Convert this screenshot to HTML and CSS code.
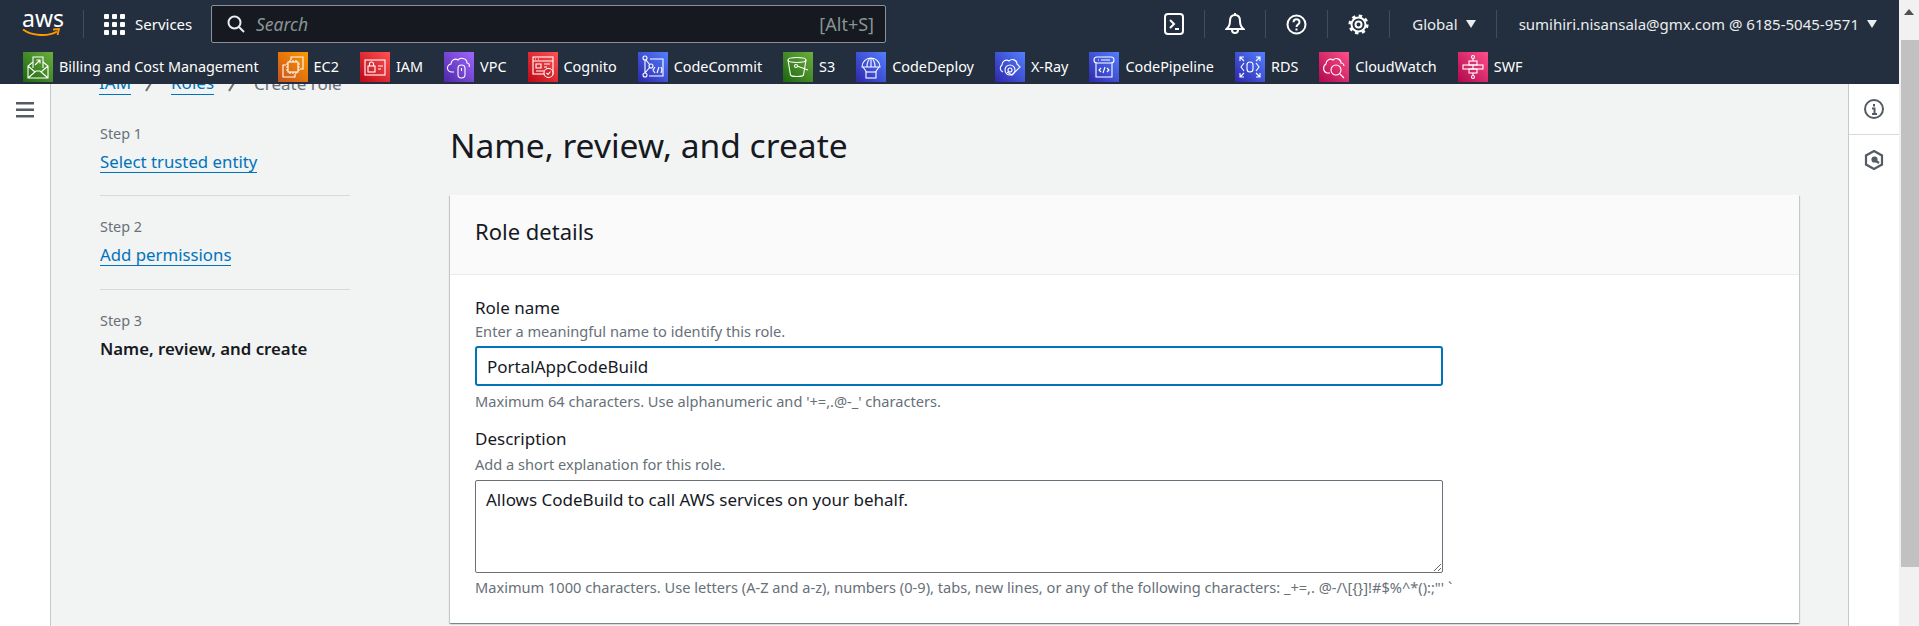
FILE: index.html
```html
<!DOCTYPE html>
<html lang="en">

<head>
  <meta charset="UTF-8">
  <title>Create role</title>
  <link rel="stylesheet" href="styles.css">
</head>

<body>
  <div class="window">
    <div class="page">
      <header class="topbar">
        <div class="logo">
          <span class="logo-text">aws</span>
          <svg class="logo-smile" viewBox="0 0 40 10" width="40" height="10">
            <path d="M1 1.5C10 8 26 9 35 3.5" fill="none" stroke="#f90" stroke-width="2" />
            <path d="M31 1.5l6-.5-1.500 6" fill="none" stroke="#f90" stroke-width="1.800" />
          </svg>
        </div>
        <div class="services">
          <svg viewBox="0 0 21 21" width="21" height="21" fill="#fff">
            <rect x="0" y="0" width="5" height="5" rx="1" />
            <rect x="8" y="0" width="5" height="5" rx="1" />
            <rect x="16" y="0" width="5" height="5" rx="1" />
            <rect x="0" y="8" width="5" height="5" rx="1" />
            <rect x="8" y="8" width="5" height="5" rx="1" />
            <rect x="16" y="8" width="5" height="5" rx="1" />
            <rect x="0" y="16" width="5" height="5" rx="1" />
            <rect x="8" y="16" width="5" height="5" rx="1" />
            <rect x="16" y="16" width="5" height="5" rx="1" />
          </svg>
          <span>Services</span>
        </div>
        <div class="search">
          <svg viewBox="0 0 18 18" width="18" height="18" fill="none" stroke="#eaeded" stroke-width="2">
            <circle cx="7.500" cy="7.500" r="6" />
            <path d="M12 12l5 5" />
          </svg>
          <span class="search-placeholder">Search</span>
          <span class="search-key">[Alt+S]</span>
        </div>
        <div class="tools">
          <div class="tool">
            <svg viewBox="0 0 20 24" width="20" height="24" fill="none" stroke="#fff" stroke-width="2">
              <rect x="1" y="2" width="18" height="20" rx="3" />
              <path d="M6 8l4 4-4 4M11 17h4" />
            </svg>
          </div>
          <div class="tool">
            <svg viewBox="0 0 20 24" width="20" height="24" fill="none" stroke="#fff" stroke-width="2">
              <path d="M10 3c-4 0-5 3-5 6 0 4-1 6-3.500 8h17C16 15 15 13 15 9c0-3-1-6-5-6z" />
              <path d="M7 18a3 3 0 0 0 6 0" />
              <path d="M10 1v2" />
            </svg>
          </div>
          <div class="tool">
            <svg viewBox="0 0 21 21" width="21" height="21" fill="none" stroke="#fff" stroke-width="2">
              <circle cx="10.500" cy="10.500" r="9" />
              <path d="M7.500 8.200c0-4 6-4 6-.2 0 2.500-3 2.500-3 5" />
              <path d="M10.500 14.500v2" />
            </svg>
          </div>
          <div class="tool">
            <svg viewBox="0 0 21 21" width="21" height="21" fill="none" stroke="#fff" stroke-width="2">
              <circle cx="10.500" cy="10.500" r="3" />
              <circle cx="10.500" cy="10.500" r="7" />
              <circle cx="10.500" cy="10.500" r="8.800" stroke-width="2.500" stroke-dasharray="3.400 3.510" />
            </svg>
          </div>
          <div class="tool tool-text tool-global">
            <span>Global</span><i class="caret"></i>
          </div>
          <div class="tool tool-text tool-last">
            <span>sumihiri.nisansala@gmx.com @ 6185-5045-9571</span><i class="caret"></i>
          </div>
        </div>
      </header>

      <nav class="favbar">
        <a class="fav">
          <span class="tile green"><svg viewBox="0 0 30 30">
              <path d="M10 10l-5 4v12h20V14l-5-4M5 14l7 6M25 14l-7 6M5 26l8-7h4l8 7" />
              <path d="M10 16V5h10v11M12 13l5-5M13.500 8H17v3.500" />
            </svg></span>
          <span>Billing and Cost Management</span>
        </a>
        <a class="fav">
          <span class="tile orange"><svg viewBox="0 0 30 30">
              <path d="M13 8V5h12v12h-3M8 13H5v12h12v-3" />
              <rect x="10" y="10" width="10" height="10" />
              <path d="M12 8v2M15 8v2M18 8v2M12 20v2M15 20v2M18 20v2M8 12h2M8 15h2M8 18h2M20 12h2M20 15h2M20 18h2" />
            </svg></span>
          <span>EC2</span>
        </a>
        <a class="fav">
          <span class="tile red"><svg viewBox="0 0 30 30">
              <rect x="5" y="8" width="20" height="15" />
              <rect x="8" y="14" width="7" height="6" />
              <path d="M9.500 14v-2a2 2 0 0 1 4 0v2M18 14h5M18 17h3" />
            </svg></span>
          <span>IAM</span>
        </a>
        <a class="fav">
          <span class="tile purple"><svg viewBox="0 0 30 30">
              <path d="M10 20H8a4 4 0 0 1-1-8c0-4 4-6 7-4 2-3 9-2 9 3 2 0 3 2 2 4" />
              <rect x="14" y="13" width="7" height="13" rx="3.500" />
              <path d="M17.500 16v3" />
            </svg></span>
          <span>VPC</span>
        </a>
        <a class="fav">
          <span class="tile red"><svg viewBox="0 0 30 30">
              <rect x="5" y="5" width="20" height="17" />
              <path d="M5 9h20M7 7h1M10 7h1M8 12h5v4H8zM16 12h6M16 15h3M8 19h8" />
              <circle cx="20.500" cy="21" r="4.500" fill="#d5232e" />
              <path d="M18.500 21l1.500 1.500 2.500-3" />
            </svg></span>
          <span>Cognito</span>
        </a>
        <a class="fav">
          <span class="tile blue"><svg viewBox="0 0 30 30">
              <circle cx="7" cy="6" r="2" />
              <circle cx="7" cy="23" r="2" />
              <circle cx="13" cy="14" r="2" />
              <path d="M7 8v13M8 8l4 5M7 21l5-6M12 7h13v17H11" />
              <path d="M17 15l-2 3 2 3M19 21l2-6M23 15l1 3-1 3" />
            </svg></span>
          <span>CodeCommit</span>
        </a>
        <a class="fav">
          <span class="tile green"><svg viewBox="0 0 30 30">
              <ellipse cx="14" cy="8" rx="9" ry="2.500" />
              <path d="M5 8l2.500 15c.5 2 12.500 2 13 0L23 8" />
              <circle cx="13" cy="14" r="1.500" />
              <path d="M14 14l11 4" />
            </svg></span>
          <span>S3</span>
        </a>
        <a class="fav">
          <span class="tile blue"><svg viewBox="0 0 30 30">
              <path d="M6 15a9 9 0 0 1 18 0zM11 15c0-5 2-9 4-9s4 4 4 9M15 6v9" />
              <path d="M7 15l3.500 5M23 15l-3.500 5" />
              <rect x="10" y="20" width="10" height="6" />
            </svg></span>
          <span>CodeDeploy</span>
        </a>
        <a class="fav">
          <span class="tile blue"><svg viewBox="0 0 30 30">
              <path d="M8 20a4 4 0 0 1-1-7c0-4 4-6 7-4 3-3 8-1 8 3l3 3-8 8-5-3" />
              <circle cx="15" cy="18" r="5" />
              <circle cx="15" cy="18" r="2" />
            </svg></span>
          <span>X-Ray</span>
        </a>
        <a class="fav">
          <span class="tile blue"><svg viewBox="0 0 30 30">
              <rect x="5" y="5" width="20" height="6" rx="3" />
              <path d="M7 11v14h16V11M9 8h1M12 8h9" />
              <path d="M12 16l-2 2 2 2M18 16l2 2-2 2M16 15l-2 6" />
            </svg></span>
          <span>CodePipeline</span>
        </a>
        <a class="fav">
          <span class="tile blue"><svg viewBox="0 0 30 30">
              <rect x="12" y="10" width="6" height="10" rx="3" />
              <path d="M9 11l-3 4 3 4M21 11l3 4-3 4M5 9V5h4M21 5h4v4M5 21v4h4M21 25h4v-4M5 5l4 4M25 5l-4 4M5 25l4-4M25 25l-4-4" />
            </svg></span>
          <span>RDS</span>
        </a>
        <a class="fav">
          <span class="tile pink"><svg viewBox="0 0 30 30">
              <path d="M11 21H8a5 5 0 0 1-1-9c0-4 4-6 7-4 3-3 8-1 8 3 2 0 3 2 3 3" />
              <circle cx="17" cy="18" r="5" />
              <path d="M21 22l4 4" />
            </svg></span>
          <span>CloudWatch</span>
        </a>
        <a class="fav">
          <span class="tile pink"><svg viewBox="0 0 30 30">
              <circle cx="15" cy="5" r="1.500" />
              <circle cx="15" cy="25" r="1.500" />
              <rect x="11" y="9" width="8" height="4" />
              <rect x="5" y="13" width="20" height="4" />
              <rect x="11" y="17" width="8" height="4" />
              <path d="M15 6.500V9M15 21v2.500M15 13v4" />
            </svg></span>
          <span>SWF</span>
        </a>
      </nav>

      <div class="workspace">
        <aside class="rail">
          <svg viewBox="0 0 18 16" width="18" height="16" fill="#545b64">
            <rect width="18" height="2.500" />
            <rect y="6.500" width="18" height="2.500" />
            <rect y="13" width="18" height="2.500" />
          </svg>
        </aside>

        <main class="main">
          <div class="scrolled">
            <div class="crumbs">
              <a class="link">IAM</a>
              <svg viewBox="0 0 12 18" width="12" height="18" fill="none" stroke="#687078" stroke-width="2">
                <path d="M1 17L11 1" />
              </svg>
              <a class="link">Roles</a>
              <svg viewBox="0 0 12 18" width="12" height="18" fill="none" stroke="#687078" stroke-width="2">
                <path d="M1 17L11 1" />
              </svg>
              <span class="crumb-current">Create role</span>
            </div>

            <div class="wizard">
              <ol class="steps">
                <li class="step">
                  <small>Step 1</small>
                  <a class="link">Select trusted entity</a>
                </li>
                <li class="step step-tall">
                  <small>Step 2</small>
                  <a class="link">Add permissions</a>
                </li>
                <li class="step">
                  <small>Step 3</small>
                  <b>Name, review, and create</b>
                </li>
              </ol>

              <div class="form">
                <h1>Name, review, and create</h1>
                <section class="card">
                  <h2 class="card-title">Role details</h2>
                  <div class="card-body">
                    <div class="field">
                      <label for="role_name">Role name</label>
                      <p class="hint">Enter a meaningful name to identify this role.</p>
                      <input id="role_name" type="text" value="PortalAppCodeBuild">
                      <p class="hint">Maximum 64 characters. Use alphanumeric and '+=,.@-_' characters.</p>
                    </div>
                    <div class="field">
                      <label for="role_desc">Description</label>
                      <p class="hint">Add a short explanation for this role.</p>
                      <textarea id="role_desc">Allows CodeBuild to call AWS services on your behalf.</textarea>
                      <p class="hint">Maximum 1000 characters. Use letters (A-Z and a-z), numbers (0-9), tabs, new lines, or any of the following characters: _+=,. @-/\[{}]!#$%^*():;"' `</p>
                    </div>
                  </div>
                </section>
              </div>
            </div>
          </div>
        </main>

        <aside class="rail rail-right">
          <div class="rail-cell">
            <svg viewBox="0 0 20 20" width="20" height="20" fill="none" stroke="#545b64" stroke-width="2">
              <circle cx="10" cy="10" r="9" />
              <path d="M10 5v2.500M8 9.500h2.500V15M8 15h5" />
            </svg>
          </div>
          <div class="rail-cell">
            <svg viewBox="0 0 20 20" width="20" height="20" fill="none" stroke="#545b64" stroke-width="2.200">
              <path d="M10 1l8 4.500v9L10 19l-8-4.500v-9z" />
              <circle cx="10.500" cy="9.500" r="2" fill="#545b64" />
              <path d="M12 11l3 2" />
            </svg>
          </div>
        </aside>
      </div>
    </div>

    <div class="scrollbar">
      <i class="scroll-up"></i>
      <div class="scroll-thumb"></div>
    </div>
  </div>
</body>

</html>
```

FILE: styles.css
```css
*,
*::before,
*::after {
  box-sizing: border-box;
}

:root {
  --nav-bg: #232f3e;
  --text: #16191f;
  --muted: #687078;
  --link: #0073bb;
  --line: #d5dbdb;
}

html,
body {
  height: 100%;
  margin: 0;
  overflow: hidden;
}

body {
  font-family: "Noto Sans", sans-serif;
  font-size: 14px;
  color: var(--text);
}

.window {
  display: flex;
  height: 100%;
}

.page {
  flex: 1;
  min-width: 0;
  display: flex;
  flex-direction: column;
}

/* top bars */
.topbar {
  height: 50px;
  padding-bottom: 2px;
  display: flex;
  align-items: center;
  background: var(--nav-bg);
  color: #eaeded;
  font-size: 15px;
}

.logo {
  width: 84px;
  height: 28px;
  padding-left: 22px;
  border-right: 1px solid #414d5c;
  display: flex;
  flex-direction: column;
  line-height: 20px;
}

.logo-text {
  color: #fff;
  font-size: 23px;
  height: 18px;
  line-height: 17px;
}

.logo-smile {
  display: block;
}

.services {
  display: flex;
  align-items: center;
  gap: 10px;
  margin-left: 20px;
  color: #fff;
  width: 107px;
}

.search {
  width: 675px;
  height: 38px;
  padding: 0 11px 0 15px;
  display: flex;
  align-items: center;
  gap: 11px;
  background: #16191f;
  border: 1px solid #879596;
  border-radius: 2px;
  color: #879596;
}

.search-placeholder {
  font-style: italic;
  font-size: 17.5px;
}

.search-key {
  margin-left: auto;
  font-size: 18px;
}

.tools {
  margin-left: auto;
  display: flex;
  align-items: center;
}

.tool {
  height: 28px;
  padding: 0 20px;
  display: flex;
  align-items: center;
  border-right: 1px solid #414d5c;
}

.tool-text {
  gap: 8px;
  padding: 0 22px;
}

.tool-global {
  padding-right: 20px;
}

.tool-last {
  border-right: 0;
}

.caret {
  width: 0;
  height: 0;
  border-left: 5px solid transparent;
  border-right: 5px solid transparent;
  border-top: 8px solid #eaeded;
}

.favbar {
  height: 34px;
  display: flex;
  gap: 21px;
  padding-left: 23px;
  background: var(--nav-bg);
  color: #fff;
  font-size: 14.4px;
  white-space: nowrap;
}

.fav {
  display: flex;
  align-items: center;
  gap: 6px;
  height: 30px;
  margin-top: 2px;
}

.fav:first-child {
  margin-right: -2px;
}

.fav span:last-child {
  padding-bottom: 2px;
}

.tile {
  width: 30px;
  height: 30px;
  display: block;
}

.tile svg {
  display: block;
  width: 30px;
  height: 30px;
  fill: none;
  stroke: #fff;
  stroke-width: 1.100;
}

.green {
  background: linear-gradient(45deg, #1b660f, #6cae3e);
}

.orange {
  background: linear-gradient(45deg, #c8511b, #f90);
}

.red {
  background: linear-gradient(45deg, #bd0816, #ff5252);
}

.purple {
  background: linear-gradient(45deg, #4d27a8, #a166ff);
}

.blue {
  background: linear-gradient(45deg, #2e27ad, #527fff);
}

.pink {
  background: linear-gradient(45deg, #b0084d, #ff4f8b);
}

/* page body */
.workspace {
  flex: 1;
  min-height: 0;
  display: flex;
}

.rail {
  width: 51px;
  padding: 18px 0 0 16px;
  background: #fff;
  border-right: 1px solid #c4cbcb;
}

.rail-right {
  width: 51px;
  padding: 0;
  border-right: 0;
  border-left: 1px solid #c4cbcb;
}

.rail-cell {
  height: 51px;
  padding-top: 15px;
  display: flex;
  justify-content: center;
  border-bottom: 1px solid #d5dbdb;
}

.rail-cell:last-child {
  border-bottom: 0;
}

.main {
  flex: 1;
  min-width: 0;
  overflow: hidden;
  background: #f2f3f3;
}

.scrolled {
  margin-top: -13px;
  padding: 0 48px 0 49px;
}

.link {
  color: var(--link);
  border-bottom: 1px solid var(--link);
}

.crumbs {
  display: flex;
  align-items: center;
  gap: 14px;
  height: 24px;
  margin-left: -1px;
  font-size: 17px;
  line-height: 23px;
}

.crumb-current {
  color: var(--muted);
}

.wizard {
  display: flex;
  gap: 100px;
}

.steps {
  width: 250px;
  flex: none;
  list-style: none;
  margin: 0;
  padding: 0;
  margin-top: 28px;
}

.step {
  display: flex;
  flex-direction: column;
  align-items: flex-start;
  height: 73px;
  padding-top: 1px;
  border-bottom: 1px solid var(--line);
  margin-bottom: 20px;
  font-size: 16.8px;
}

.step-tall {
  height: 74px;
}

.step:last-child {
  border-bottom: 0;
}

.step small {
  font-size: 14.4px;
  line-height: 20px;
  color: var(--muted);
  margin-bottom: 8px;
}

.step .link,
.step b {
  line-height: 20px;
}

.step b {
  font-weight: 600;
}

.form {
  flex: 1;
  min-width: 0;
  padding-right: 1px;
}

h1 {
  margin: 27px 0;
  font-size: 33.6px;
  font-weight: 400;
  line-height: 46px;
}

.card {
  background: #fff;
  box-shadow: 0 1px 1px 0 rgba(0, 28, 36, .3), 1px 1px 1px 0 rgba(0, 28, 36, .15), -1px 1px 1px 0 rgba(0, 28, 36, .15);
}

.card-title {
  margin: 0;
  height: 80px;
  padding: 0 25px 8px;
  display: flex;
  align-items: center;
  font-size: 22px;
  font-weight: 400;
  background: #fafafa;
  border-bottom: 1px solid #eaeded;
}

.card-body {
  padding: 19px 25px 26px;
}

.field label {
  display: block;
  font-size: 17px;
  line-height: 27px;
}

.field + .field label {
  margin-bottom: 2px;
}

.hint {
  margin: 0;
  font-size: 14.6px;
  line-height: 20px;
  color: var(--muted);
}

.field {
  margin-bottom: 14px;
}

.field input,
.field textarea {
  display: block;
  width: 968px;
  font: inherit;
  font-size: 17px;
  color: var(--text);
  background: #fff;
  margin: 5px 0;
  outline: 0;
}

.field input {
  height: 40px;
  padding: 0 10px;
  border: 2px solid var(--link);
  border-radius: 3px;
}

.field textarea {
  height: 93px;
  margin: 6px 0 4px;
  padding: 7px 10px;
  border: 1px solid #687078;
  border-radius: 2px;
  resize: vertical;
}

.field:last-child {
  margin-bottom: 0;
}

.field:last-child .hint:last-child {
  white-space: nowrap;
}

/* fake page scrollbar */
.scrollbar {
  width: 20px;
  flex: none;
  padding-left: 2px;
  background: #f1f1f1;
}

.scroll-up {
  display: block;
  width: 0;
  height: 0;
  margin: 9px 0 0 3px;
  border-left: 5px solid transparent;
  border-right: 5px solid transparent;
  border-bottom: 6px solid #505050;
}

.scroll-thumb {
  height: 527px;
  margin-top: 25px;
  background: #c1c1c1;
}
```
